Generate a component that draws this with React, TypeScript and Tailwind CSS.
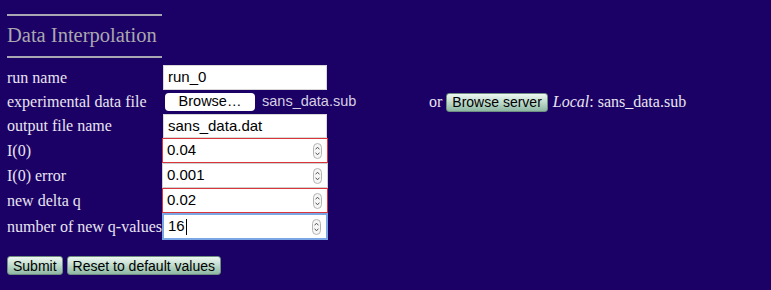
import React from "react"

const serif = { fontFamily: '"Liberation Serif", "Times New Roman", serif' }

function Spinner() {
  return (
    <svg width="9" height="16" viewBox="0 0 9 16" className="mr-[5px] shrink-0">
      <rect x="0.5" y="0.5" width="8" height="15" rx="4" fill="#f6f6f6" stroke="#b4b4b4" />
      <path d="M2.6 6.3 L4.5 4.2 L6.4 6.3" fill="none" stroke="#555" strokeWidth="1" />
      <path d="M2.6 9.7 L4.5 11.8 L6.4 9.7" fill="none" stroke="#555" strokeWidth="1" />
    </svg>
  )
}

function Label({ children }: { children: React.ReactNode }) {
  return (
    <div className="w-[156px] shrink-0 whitespace-nowrap text-[16px] text-[#e8e5f0]" style={serif}>
      {children}
    </div>
  )
}

function NumberInput({ value, tone, caret }: { value: string; tone: "red" | "gray" | "blue"; caret?: boolean }) {
  const border =
    tone === "red"
      ? "border border-[#d8363a]"
      : tone === "blue"
        ? "border-2 border-[#7aa6e6]"
        : "border border-[#cfcfcf]"
  return (
    <div className={`flex h-full w-[166px] items-center justify-between bg-white pl-[4px] ${border}`}>
      <span className="flex items-center text-[15px] text-black">
        {value}
        {caret && <span className="ml-[1px] inline-block h-[16px] w-px bg-black" />}
      </span>
      <Spinner />
    </div>
  )
}

function GelButton({ children, className = "" }: { children: React.ReactNode; className?: string }) {
  return (
    <span
      className={`inline-flex h-[19px] items-center rounded-[3px] border border-[#6e8f80] bg-gradient-to-b from-[#eef8f2] via-[#bedacb] to-[#8fb8a4] px-[5px] text-[14px] leading-none text-black ${className}`}
    >
      {children}
    </span>
  )
}

export default function App() {
  return (
    <div
      className="h-[290px] w-[771px] overflow-hidden bg-[#1b0066] pl-[7px]"
      style={{ fontFamily: '"Liberation Sans", Arial, sans-serif' }}
    >
      <div className="h-[14px]" />
      <div className="h-[2px] w-[155px] bg-[#a9a6b4]" />
      <div className="mt-[7px] h-[24px] text-[20.5px] leading-[24px] text-[#aaa8ae]" style={serif}>
        Data Interpolation
      </div>
      <div className="mt-[9px] h-[2px] w-[155px] bg-[#a9a6b4]" />

      <div className="mt-[7px] flex flex-col">
        <div className="flex h-[25px] items-center">
          <Label>run name</Label>
          <div className="flex h-[25px] w-[164px] items-center border border-[#d8d8d8] bg-white pl-[4px] text-[15px] text-black">
            run_0
          </div>
        </div>

        <div className="flex h-[24px] items-center">
          <Label>experimental data file</Label>
          <span className="ml-[2px] inline-flex h-[18px] w-[90px] items-center justify-center rounded-[4px] bg-white text-[14.5px] text-black">
            Browse…
          </span>
          <span className="ml-[7px] w-[167px] text-[14.5px] text-[#d6d0e2]">sans_data.sub</span>
          <span className="text-[16px] text-[#e8e5f0]" style={serif}>
            or
          </span>
          <GelButton className="ml-[4px]">Browse server</GelButton>
          <span className="ml-[5px] text-[16px] text-[#e8e5f0]" style={serif}>
            <i>Local</i>: sans_data.sub
          </span>
        </div>

        <div className="flex h-[24px] items-center">
          <Label>output file name</Label>
          <div className="flex h-[24px] w-[164px] items-center border border-[#d8d8d8] bg-white pl-[4px] text-[15px] text-black">
            sans_data.dat
          </div>
        </div>

        <div className="flex h-[25px] items-center">
          <Label>I(0)</Label>
          <div className="-ml-px h-[25px]">
            <NumberInput value="0.04" tone="red" />
          </div>
        </div>

        <div className="flex h-[25px] items-center">
          <Label>I(0) error</Label>
          <div className="-ml-px h-[25px]">
            <NumberInput value="0.001" tone="gray" />
          </div>
        </div>

        <div className="flex h-[25px] items-center">
          <Label>new delta q</Label>
          <div className="-ml-px h-[25px]">
            <NumberInput value="0.02" tone="red" />
          </div>
        </div>

        <div className="flex h-[27px] items-center">
          <Label>number of new q-values</Label>
          <div className="-ml-px h-[27px]">
            <NumberInput value="16" tone="blue" caret />
          </div>
        </div>
      </div>

      <div className="mt-[16px] flex gap-[4px]">
        <GelButton>Submit</GelButton>
        <GelButton>Reset to default values</GelButton>
      </div>
    </div>
  )
}
